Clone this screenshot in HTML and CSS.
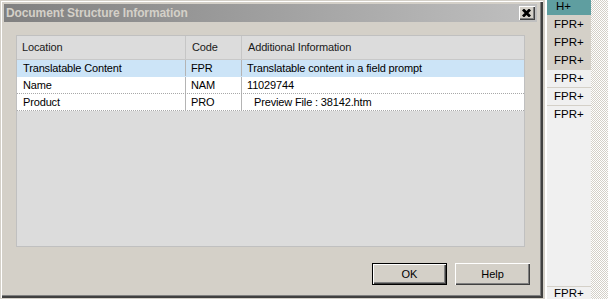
FILE: index.html
```html
<!DOCTYPE html>
<html>
<head>
<meta charset="utf-8">
<link rel="stylesheet" href="styles.css">
</head>
<body>
<div class="screen">
  <div class="dialog">
    <div class="titlebar">
      <span class="title">Document Structure Information</span>
      <div class="close"><svg width="9" height="8" viewBox="0 0 9 8"><path d="M1 0.5L8 7.5M8 0.5L1 7.5" stroke="#000" stroke-width="2.8" fill="none"/></svg></div>
    </div>
    <div class="content">
      <div class="list">
        <div class="row head">
          <div class="cell c1">Location</div>
          <div class="cell c2">Code</div>
          <div class="cell c3">Additional Information</div>
        </div>
        <div class="row item sel">
          <div class="cell c1">Translatable Content</div>
          <div class="cell c2">FPR</div>
          <div class="cell c3">Translatable content in a field prompt</div>
        </div>
        <div class="row item">
          <div class="cell c1">Name</div>
          <div class="cell c2">NAM</div>
          <div class="cell c3">11029744</div>
        </div>
        <div class="row item">
          <div class="cell c1">Product</div>
          <div class="cell c2">PRO</div>
          <div class="cell c3 indent">Preview File : 38142.htm</div>
        </div>
      </div>
      <div class="buttons">
        <div class="btn default"><span>OK</span></div>
        <div class="btn"><span>Help</span></div>
      </div>
    </div>
  </div>
  <div class="strip"></div>
  <div class="panel">
    <div class="pcell teal">H+</div>
    <div class="pcell gray">FPR+</div>
    <div class="pcell gray">FPR+</div>
    <div class="pcell gray">FPR+</div>
    <div class="pcell light">FPR+</div>
    <div class="pcell light">FPR+</div>
    <div class="pcell light">FPR+</div>
    <div class="pspacer"></div>
    <div class="pcell light last">FPR+</div>
  </div>
  <div class="checker"></div>
</div>
</body>
</html>
```

FILE: styles.css
```css
html, body {
  margin: 0;
  padding: 0;
}
body {
  width: 608px;
  height: 299px;
  overflow: hidden;
  background: #d4d0c8;
  font-family: "Liberation Sans", Arial, sans-serif;
  font-size: 11px;
  color: #000;
}
.screen {
  display: flex;
  height: 299px;
}
.dialog {
  flex: none;
  width: 543px;
  height: 298px;
  box-sizing: border-box;
  padding: 4px 6px 0 4px;
  background: #d4d0c8;
  box-shadow: inset 1px 1px 0 #d4d0c8, inset 2px 2px 0 #fff, inset -2px -2px 0 #404040, inset -3px -3px 0 #808080;
  display: flex;
  flex-direction: column;
}
.titlebar {
  height: 18px;
  background: linear-gradient(to right, #808080, #c0c0c0);
  display: flex;
  align-items: center;
  justify-content: space-between;
  padding: 0 2px 0 2px;
}
.title {
  color: #d4d0c8;
  font-weight: bold;
  font-size: 12px;
  letter-spacing: -0.1px;
}
.close {
  width: 16px;
  height: 14px;
  box-sizing: border-box;
  background: #d4d0c8;
  box-shadow: inset 1px 1px 0 #fff, inset -1px -1px 0 #404040, inset -2px -2px 0 #808080;
  display: flex;
  align-items: center;
  justify-content: center;
  padding: 0 1px 1px 0;
}
.close svg { display: block; }
.content {
  flex: 1;
  display: flex;
  flex-direction: column;
  padding: 13px 0 0 12px;
}
.list {
  width: 509px;
  height: 212px;
  box-sizing: border-box;
  border: 1px solid #c0c0c0;
  background: #dcdcdc;
  letter-spacing: -0.15px;
}
.row {
  display: grid;
  grid-template-columns: 169px 56px 1fr;
}
.cell {
  white-space: nowrap;
  overflow: hidden;
  padding-left: 6px;
}
.head {
  height: 23px;
  border-bottom: 1px solid #c8c8c8;
  background: #dcdcdc;
}
.head .cell {
  line-height: 23px;
  border-right: 1px solid #c6c6c6;
  color: #1a1a1a;
}
.head .c3 { border-right: none; }
.head .c1 { padding-left: 5px; }
.item {
  height: 17px;
  box-sizing: border-box;
  background: #fff;
  border-bottom: 1px dotted #a8a8a8;
}
.item .cell {
  line-height: 16px;
  border-right: 1px solid #b4b4b4;
}
.item .c3 { border-right: none; padding-left: 5px; }
.item .c1 { padding-left: 6px; }
.item .c2 { padding-left: 5px; }
.item .indent { padding-left: 12px; }
.sel {
  background: #cce4f7;
  border-bottom-color: #cce4f7;
}
.buttons {
  display: flex;
  justify-content: flex-end;
  gap: 8px;
  margin-top: 16px;
  padding-right: 7px;
}
.btn {
  width: 75px;
  height: 22px;
  box-sizing: border-box;
  background: #d4d0c8;
  box-shadow: inset 1px 1px 0 #fff, inset -1px -1px 0 #404040, inset -2px -2px 0 #808080;
  display: flex;
  align-items: center;
  justify-content: center;
}
.btn.default {
  box-shadow: inset 0 0 0 1px #000, inset 2px 2px 0 #fff, inset -2px -2px 0 #404040, inset -3px -3px 0 #808080;
}
.strip {
  flex: none;
  width: 4px;
  height: 299px;
  background: linear-gradient(to right, #d4d0c8 0 2px, #fff 2px 4px);
}
.panel {
  flex: none;
  width: 44px;
  height: 299px;
  display: flex;
  flex-direction: column;
  background: #f0f0f0;
  font-size: 11.5px;
}
.pcell {
  flex: none;
  height: 18px;
  line-height: 18px;
  padding-left: 7px;
  box-sizing: border-box;
}
.pcell.teal {
  height: 15px;
  line-height: 13px;
  background: #5f9ea0;
  padding-left: 9px;
}
.pcell.gray { background: #d4d0c8; }
.pcell.light {
  background: #f0f0f0;
  border-top: 1px solid #d4d0c8;
  line-height: 17px;
}
.pspacer { flex: 1; }
.pcell.last {
  height: 13px;
  line-height: 13px;
}
.checker {
  flex: 1;
  height: 299px;
  background: repeating-conic-gradient(#d4d0c8 0 25%, #fff 0 50%) 0 0 / 2px 2px;
}
```
